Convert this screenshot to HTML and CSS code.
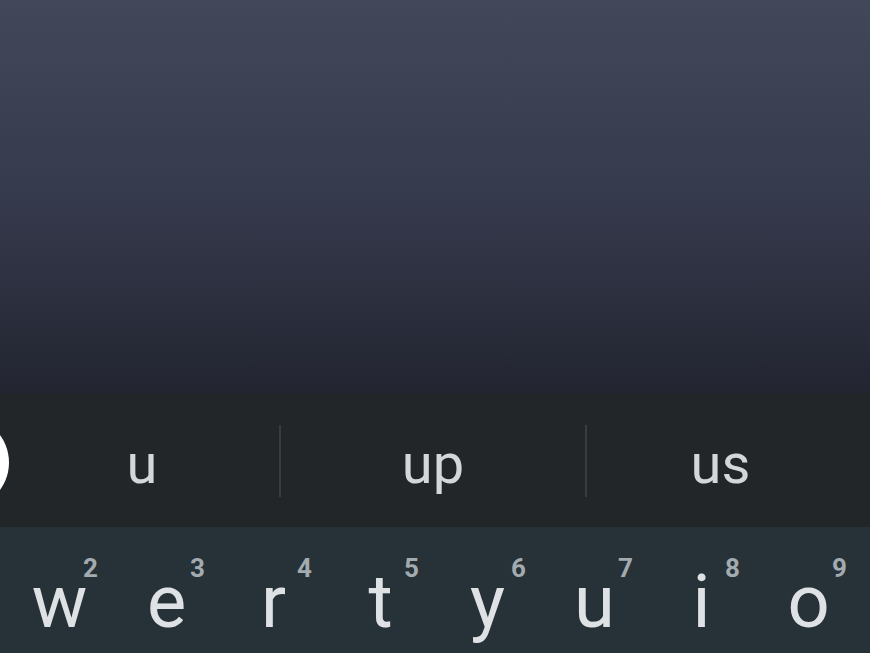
FILE: index.html
```html
<!DOCTYPE html>
<html lang="en">
<head>
<meta charset="utf-8">
<title>Keyboard</title>
<link rel="stylesheet" href="styles.css">
</head>
<body>
<div class="screen">
  <div class="backdrop"></div>
  <div class="strip">
    <div class="mic-button"></div>
    <div class="suggestion">u</div>
    <div class="divider"></div>
    <div class="suggestion">up</div>
    <div class="divider"></div>
    <div class="suggestion">us</div>
  </div>
  <div class="keyboard">
    <div class="row">
      <div class="key"><span class="hint">2</span><span class="letter">w</span></div>
      <div class="key"><span class="hint">3</span><span class="letter">e</span></div>
      <div class="key"><span class="hint">4</span><span class="letter">r</span></div>
      <div class="key"><span class="hint">5</span><span class="letter">t</span></div>
      <div class="key"><span class="hint">6</span><span class="letter">y</span></div>
      <div class="key"><span class="hint">7</span><span class="letter">u</span></div>
      <div class="key"><span class="hint">8</span><span class="letter">i</span></div>
      <div class="key"><span class="hint">9</span><span class="letter">o</span></div>
    </div>
  </div>
</div>
</body>
</html>
```
FILE: styles.css
```css
html, body {
  margin: 0;
  padding: 0;
  width: 870px;
  height: 653px;
  overflow: hidden;
  background: #263238;
  font-family: Roboto, "Noto Sans", "Liberation Sans", sans-serif;
}

.screen {
  display: flex;
  flex-direction: column;
  width: 870px;
  height: 653px;
}

.backdrop {
  height: 394px;
  flex: none;
  background: linear-gradient(to bottom, #424759 0%, #363a4d 50%, #222530 100%);
}

.strip {
  position: relative;
  height: 133px;
  flex: none;
  background: #222629;
  display: grid;
  grid-template-columns: 274px 2px 304px 2px 1fr;
  padding: 0 16px 0 5px;
  overflow: hidden;
}

.mic-button {
  position: absolute;
  left: -84px;
  top: 22px;
  width: 93px;
  height: 93px;
  border-radius: 50%;
  background: #ffffff;
}

.suggestion {
  padding-top: 42px;
  font-size: 56px;
  line-height: 56px;
  color: #d4d7da;
  text-align: center;
}

.divider {
  align-self: center;
  height: 72px;
  background: #383c40;
}

.keyboard {
  flex: 1;
  background: #263238;
  overflow: hidden;
}

.row {
  display: flex;
  padding-left: 6px;
}

.key {
  position: relative;
  flex: none;
  width: 107px;
  height: 126px;
  display: flex;
  justify-content: center;
  align-items: flex-start;
}

.letter {
  margin-top: 53px;
  font-size: 74px;
  line-height: 44px;
  color: #dfe2e4;
}

.hint {
  position: absolute;
  top: 30px;
  right: 15px;
  font-size: 26px;
  line-height: 22px;
  font-weight: 700;
  color: #a3aab0;
}
```
